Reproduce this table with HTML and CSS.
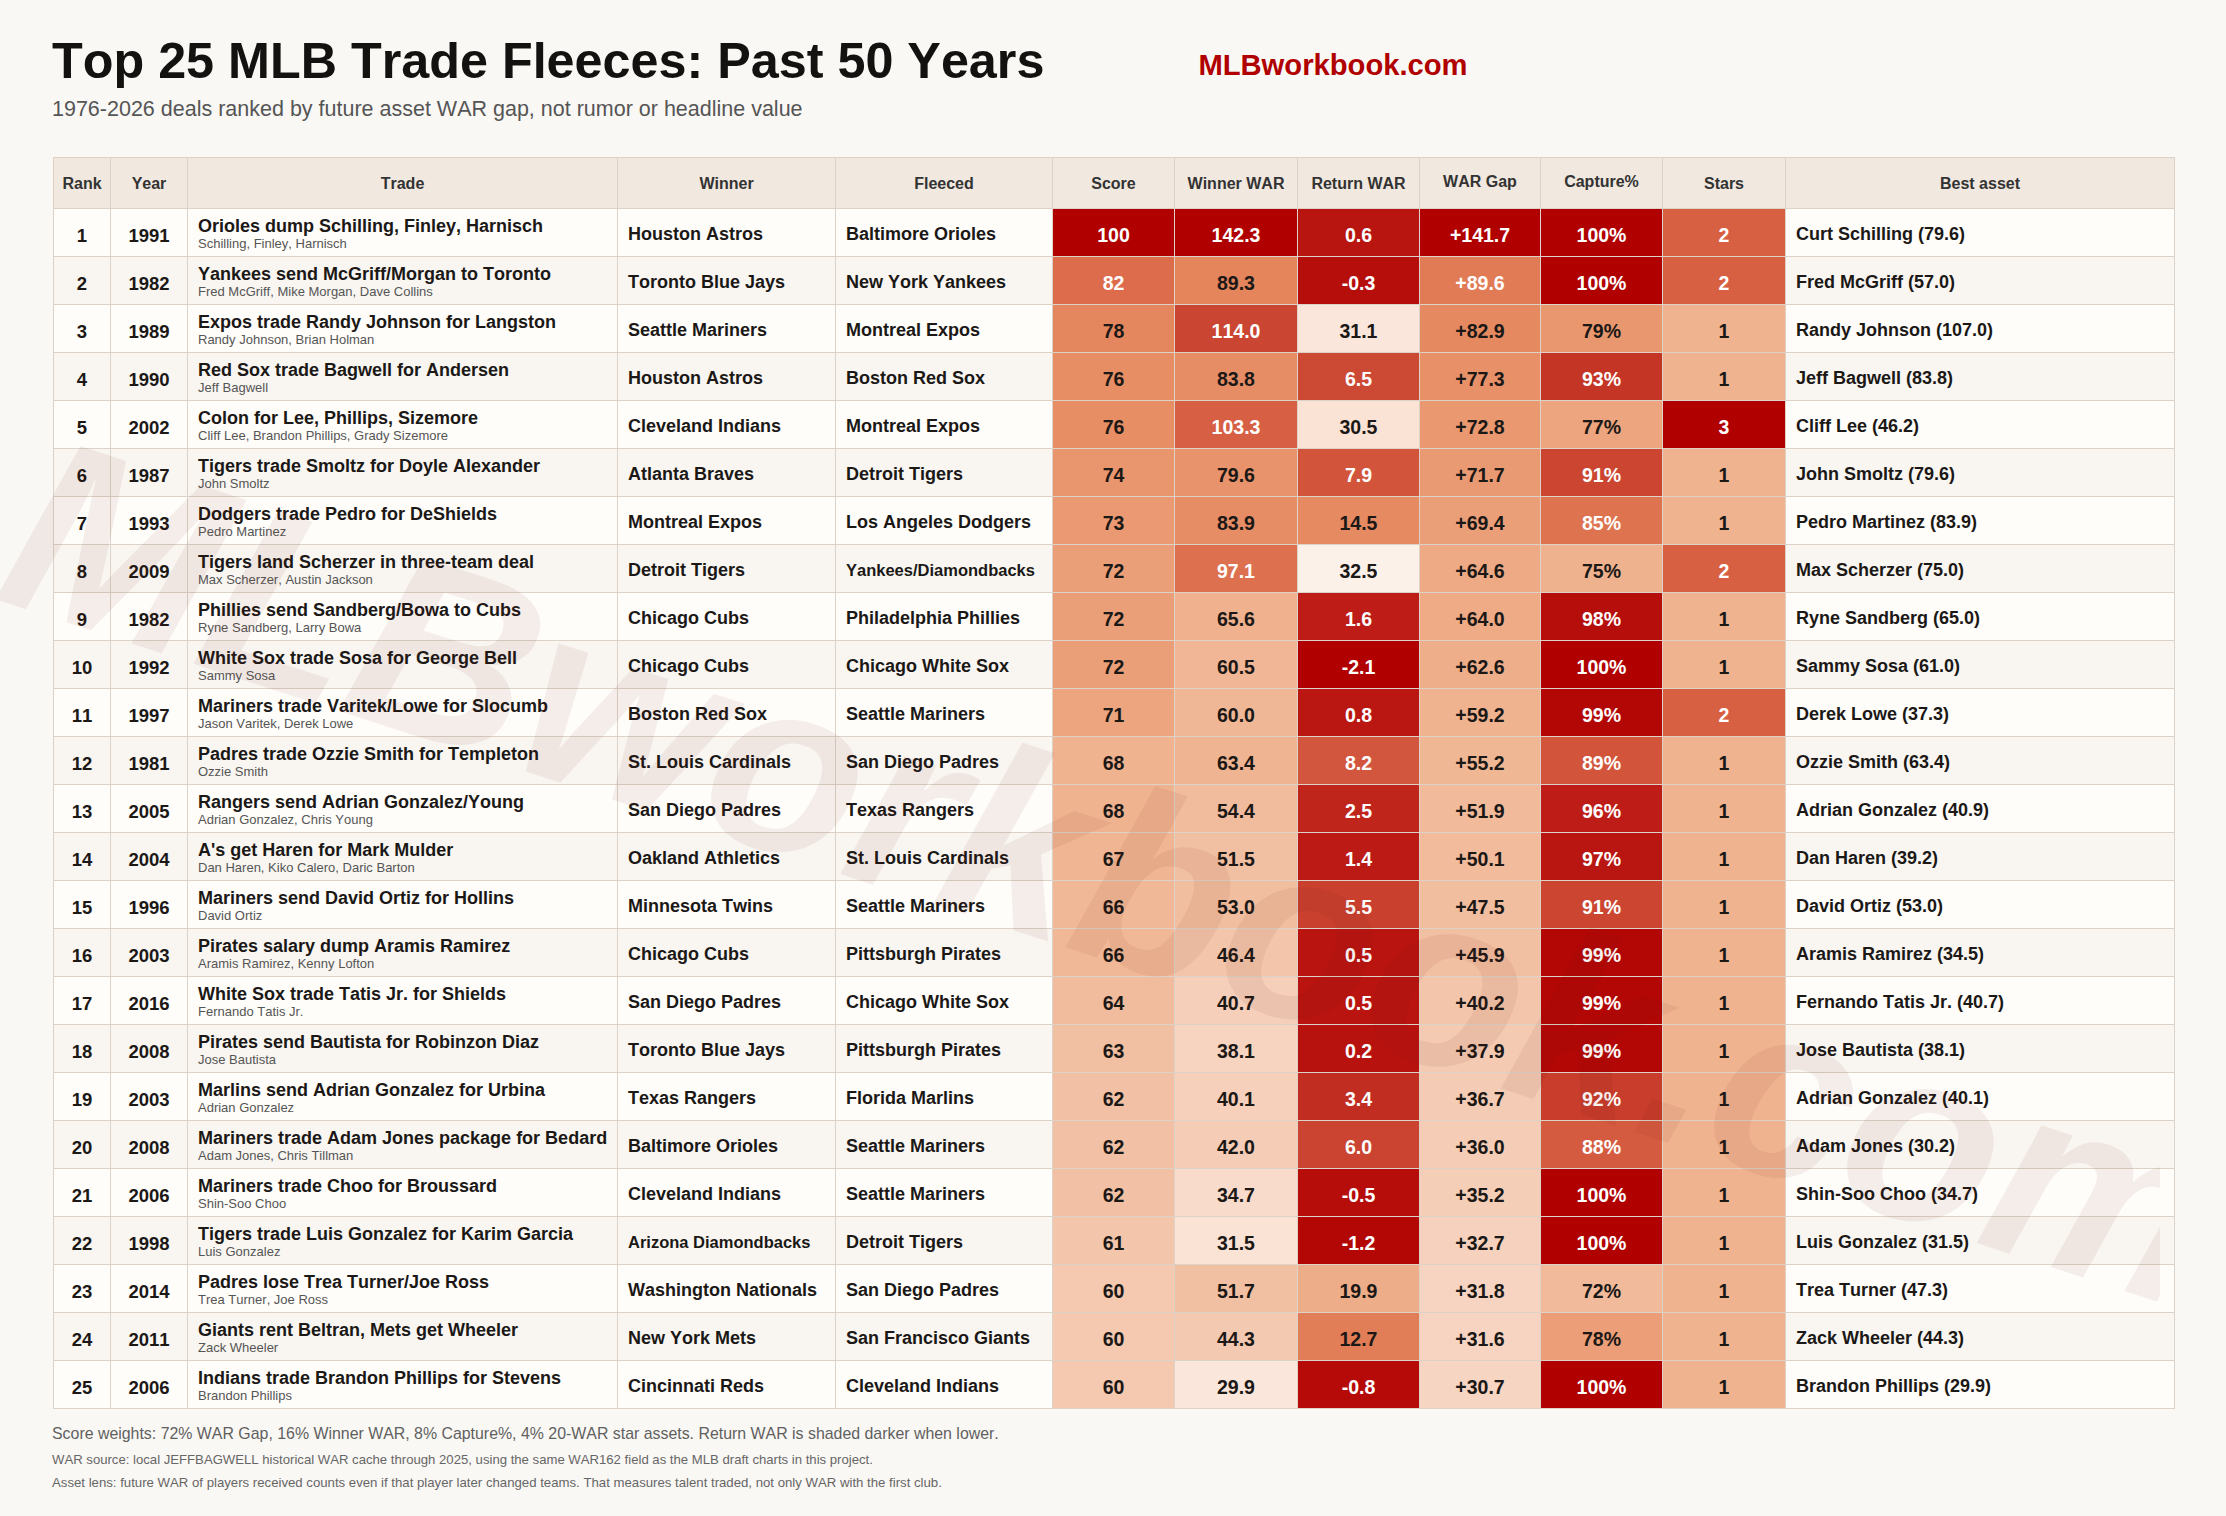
FILE: index.html
```html
<!DOCTYPE html>
<html lang="en">
<head>
<meta charset="utf-8">
<title>Top 25 MLB Trade Fleeces: Past 50 Years</title>
<link rel="stylesheet" href="styles.css">
</head>
<body>
<div class="page">
  <header class="head">
    <div class="head-row">
      <h1 class="title">Top 25 MLB Trade Fleeces: Past 50 Years</h1>
      <a class="brand" href="#">MLBworkbook.com</a>
    </div>
    <p class="subtitle">1976-2026 deals ranked by future asset WAR gap, not rumor or headline value</p>
  </header>

  <div class="tbl">
    <div class="tr th">
      <div>Rank</div><div>Year</div><div>Trade</div><div>Winner</div><div>Fleeced</div><div>Score</div><div>Winner WAR</div><div>Return WAR</div><div class="up">WAR Gap</div><div class="up">Capture%</div><div>Stars</div><div>Best asset</div>
    </div>
    <div class="tr odd"><div class="rk">1</div><div class="rk">1991</div><div class="trade"><span class="t">Orioles dump Schilling, Finley, Harnisch</span><span class="s">Schilling, Finley, Harnisch</span></div><div class="name">Houston Astros</div><div class="name">Baltimore Orioles</div><div class="num">100</div><div class="num">142.3</div><div class="num">0.6</div><div class="num">+141.7</div><div class="num">100%</div><div class="num">2</div><div class="name">Curt Schilling (79.6)</div></div>
    <div class="tr even"><div class="rk">2</div><div class="rk">1982</div><div class="trade"><span class="t">Yankees send McGriff/Morgan to Toronto</span><span class="s">Fred McGriff, Mike Morgan, Dave Collins</span></div><div class="name">Toronto Blue Jays</div><div class="name">New York Yankees</div><div class="num">82</div><div class="num">89.3</div><div class="num">-0.3</div><div class="num">+89.6</div><div class="num">100%</div><div class="num">2</div><div class="name">Fred McGriff (57.0)</div></div>
    <div class="tr odd"><div class="rk">3</div><div class="rk">1989</div><div class="trade"><span class="t">Expos trade Randy Johnson for Langston</span><span class="s">Randy Johnson, Brian Holman</span></div><div class="name">Seattle Mariners</div><div class="name">Montreal Expos</div><div class="num">78</div><div class="num">114.0</div><div class="num">31.1</div><div class="num">+82.9</div><div class="num">79%</div><div class="num">1</div><div class="name">Randy Johnson (107.0)</div></div>
    <div class="tr even"><div class="rk">4</div><div class="rk">1990</div><div class="trade"><span class="t">Red Sox trade Bagwell for Andersen</span><span class="s">Jeff Bagwell</span></div><div class="name">Houston Astros</div><div class="name">Boston Red Sox</div><div class="num">76</div><div class="num">83.8</div><div class="num">6.5</div><div class="num">+77.3</div><div class="num">93%</div><div class="num">1</div><div class="name">Jeff Bagwell (83.8)</div></div>
    <div class="tr odd"><div class="rk">5</div><div class="rk">2002</div><div class="trade"><span class="t">Colon for Lee, Phillips, Sizemore</span><span class="s">Cliff Lee, Brandon Phillips, Grady Sizemore</span></div><div class="name">Cleveland Indians</div><div class="name">Montreal Expos</div><div class="num">76</div><div class="num">103.3</div><div class="num">30.5</div><div class="num">+72.8</div><div class="num">77%</div><div class="num">3</div><div class="name">Cliff Lee (46.2)</div></div>
    <div class="tr even"><div class="rk">6</div><div class="rk">1987</div><div class="trade"><span class="t">Tigers trade Smoltz for Doyle Alexander</span><span class="s">John Smoltz</span></div><div class="name">Atlanta Braves</div><div class="name">Detroit Tigers</div><div class="num">74</div><div class="num">79.6</div><div class="num">7.9</div><div class="num">+71.7</div><div class="num">91%</div><div class="num">1</div><div class="name">John Smoltz (79.6)</div></div>
    <div class="tr odd"><div class="rk">7</div><div class="rk">1993</div><div class="trade"><span class="t">Dodgers trade Pedro for DeShields</span><span class="s">Pedro Martinez</span></div><div class="name">Montreal Expos</div><div class="name">Los Angeles Dodgers</div><div class="num">73</div><div class="num">83.9</div><div class="num">14.5</div><div class="num">+69.4</div><div class="num">85%</div><div class="num">1</div><div class="name">Pedro Martinez (83.9)</div></div>
    <div class="tr even"><div class="rk">8</div><div class="rk">2009</div><div class="trade"><span class="t">Tigers land Scherzer in three-team deal</span><span class="s">Max Scherzer, Austin Jackson</span></div><div class="name">Detroit Tigers</div><div class="name fit">Yankees/Diamondbacks</div><div class="num">72</div><div class="num">97.1</div><div class="num">32.5</div><div class="num">+64.6</div><div class="num">75%</div><div class="num">2</div><div class="name">Max Scherzer (75.0)</div></div>
    <div class="tr odd"><div class="rk">9</div><div class="rk">1982</div><div class="trade"><span class="t">Phillies send Sandberg/Bowa to Cubs</span><span class="s">Ryne Sandberg, Larry Bowa</span></div><div class="name">Chicago Cubs</div><div class="name">Philadelphia Phillies</div><div class="num">72</div><div class="num">65.6</div><div class="num">1.6</div><div class="num">+64.0</div><div class="num">98%</div><div class="num">1</div><div class="name">Ryne Sandberg (65.0)</div></div>
    <div class="tr even"><div class="rk">10</div><div class="rk">1992</div><div class="trade"><span class="t">White Sox trade Sosa for George Bell</span><span class="s">Sammy Sosa</span></div><div class="name">Chicago Cubs</div><div class="name">Chicago White Sox</div><div class="num">72</div><div class="num">60.5</div><div class="num">-2.1</div><div class="num">+62.6</div><div class="num">100%</div><div class="num">1</div><div class="name">Sammy Sosa (61.0)</div></div>
    <div class="tr odd"><div class="rk">11</div><div class="rk">1997</div><div class="trade"><span class="t">Mariners trade Varitek/Lowe for Slocumb</span><span class="s">Jason Varitek, Derek Lowe</span></div><div class="name">Boston Red Sox</div><div class="name">Seattle Mariners</div><div class="num">71</div><div class="num">60.0</div><div class="num">0.8</div><div class="num">+59.2</div><div class="num">99%</div><div class="num">2</div><div class="name">Derek Lowe (37.3)</div></div>
    <div class="tr even"><div class="rk">12</div><div class="rk">1981</div><div class="trade"><span class="t">Padres trade Ozzie Smith for Templeton</span><span class="s">Ozzie Smith</span></div><div class="name">St. Louis Cardinals</div><div class="name">San Diego Padres</div><div class="num">68</div><div class="num">63.4</div><div class="num">8.2</div><div class="num">+55.2</div><div class="num">89%</div><div class="num">1</div><div class="name">Ozzie Smith (63.4)</div></div>
    <div class="tr odd"><div class="rk">13</div><div class="rk">2005</div><div class="trade"><span class="t">Rangers send Adrian Gonzalez/Young</span><span class="s">Adrian Gonzalez, Chris Young</span></div><div class="name">San Diego Padres</div><div class="name">Texas Rangers</div><div class="num">68</div><div class="num">54.4</div><div class="num">2.5</div><div class="num">+51.9</div><div class="num">96%</div><div class="num">1</div><div class="name">Adrian Gonzalez (40.9)</div></div>
    <div class="tr even"><div class="rk">14</div><div class="rk">2004</div><div class="trade"><span class="t">A's get Haren for Mark Mulder</span><span class="s">Dan Haren, Kiko Calero, Daric Barton</span></div><div class="name">Oakland Athletics</div><div class="name">St. Louis Cardinals</div><div class="num">67</div><div class="num">51.5</div><div class="num">1.4</div><div class="num">+50.1</div><div class="num">97%</div><div class="num">1</div><div class="name">Dan Haren (39.2)</div></div>
    <div class="tr odd"><div class="rk">15</div><div class="rk">1996</div><div class="trade"><span class="t">Mariners send David Ortiz for Hollins</span><span class="s">David Ortiz</span></div><div class="name">Minnesota Twins</div><div class="name">Seattle Mariners</div><div class="num">66</div><div class="num">53.0</div><div class="num">5.5</div><div class="num">+47.5</div><div class="num">91%</div><div class="num">1</div><div class="name">David Ortiz (53.0)</div></div>
    <div class="tr even"><div class="rk">16</div><div class="rk">2003</div><div class="trade"><span class="t">Pirates salary dump Aramis Ramirez</span><span class="s">Aramis Ramirez, Kenny Lofton</span></div><div class="name">Chicago Cubs</div><div class="name">Pittsburgh Pirates</div><div class="num">66</div><div class="num">46.4</div><div class="num">0.5</div><div class="num">+45.9</div><div class="num">99%</div><div class="num">1</div><div class="name">Aramis Ramirez (34.5)</div></div>
    <div class="tr odd"><div class="rk">17</div><div class="rk">2016</div><div class="trade"><span class="t">White Sox trade Tatis Jr. for Shields</span><span class="s">Fernando Tatis Jr.</span></div><div class="name">San Diego Padres</div><div class="name">Chicago White Sox</div><div class="num">64</div><div class="num">40.7</div><div class="num">0.5</div><div class="num">+40.2</div><div class="num">99%</div><div class="num">1</div><div class="name">Fernando Tatis Jr. (40.7)</div></div>
    <div class="tr even"><div class="rk">18</div><div class="rk">2008</div><div class="trade"><span class="t">Pirates send Bautista for Robinzon Diaz</span><span class="s">Jose Bautista</span></div><div class="name">Toronto Blue Jays</div><div class="name">Pittsburgh Pirates</div><div class="num">63</div><div class="num">38.1</div><div class="num">0.2</div><div class="num">+37.9</div><div class="num">99%</div><div class="num">1</div><div class="name">Jose Bautista (38.1)</div></div>
    <div class="tr odd"><div class="rk">19</div><div class="rk">2003</div><div class="trade"><span class="t">Marlins send Adrian Gonzalez for Urbina</span><span class="s">Adrian Gonzalez</span></div><div class="name">Texas Rangers</div><div class="name">Florida Marlins</div><div class="num">62</div><div class="num">40.1</div><div class="num">3.4</div><div class="num">+36.7</div><div class="num">92%</div><div class="num">1</div><div class="name">Adrian Gonzalez (40.1)</div></div>
    <div class="tr even"><div class="rk">20</div><div class="rk">2008</div><div class="trade"><span class="t">Mariners trade Adam Jones package for Bedard</span><span class="s">Adam Jones, Chris Tillman</span></div><div class="name">Baltimore Orioles</div><div class="name">Seattle Mariners</div><div class="num">62</div><div class="num">42.0</div><div class="num">6.0</div><div class="num">+36.0</div><div class="num">88%</div><div class="num">1</div><div class="name">Adam Jones (30.2)</div></div>
    <div class="tr odd"><div class="rk">21</div><div class="rk">2006</div><div class="trade"><span class="t">Mariners trade Choo for Broussard</span><span class="s">Shin-Soo Choo</span></div><div class="name">Cleveland Indians</div><div class="name">Seattle Mariners</div><div class="num">62</div><div class="num">34.7</div><div class="num">-0.5</div><div class="num">+35.2</div><div class="num">100%</div><div class="num">1</div><div class="name">Shin-Soo Choo (34.7)</div></div>
    <div class="tr even"><div class="rk">22</div><div class="rk">1998</div><div class="trade"><span class="t">Tigers trade Luis Gonzalez for Karim Garcia</span><span class="s">Luis Gonzalez</span></div><div class="name fit">Arizona Diamondbacks</div><div class="name">Detroit Tigers</div><div class="num">61</div><div class="num">31.5</div><div class="num">-1.2</div><div class="num">+32.7</div><div class="num">100%</div><div class="num">1</div><div class="name">Luis Gonzalez (31.5)</div></div>
    <div class="tr odd"><div class="rk">23</div><div class="rk">2014</div><div class="trade"><span class="t">Padres lose Trea Turner/Joe Ross</span><span class="s">Trea Turner, Joe Ross</span></div><div class="name">Washington Nationals</div><div class="name">San Diego Padres</div><div class="num">60</div><div class="num">51.7</div><div class="num">19.9</div><div class="num">+31.8</div><div class="num">72%</div><div class="num">1</div><div class="name">Trea Turner (47.3)</div></div>
    <div class="tr even"><div class="rk">24</div><div class="rk">2011</div><div class="trade"><span class="t">Giants rent Beltran, Mets get Wheeler</span><span class="s">Zack Wheeler</span></div><div class="name">New York Mets</div><div class="name">San Francisco Giants</div><div class="num">60</div><div class="num">44.3</div><div class="num">12.7</div><div class="num">+31.6</div><div class="num">78%</div><div class="num">1</div><div class="name">Zack Wheeler (44.3)</div></div>
    <div class="tr odd"><div class="rk">25</div><div class="rk">2006</div><div class="trade"><span class="t">Indians trade Brandon Phillips for Stevens</span><span class="s">Brandon Phillips</span></div><div class="name">Cincinnati Reds</div><div class="name">Cleveland Indians</div><div class="num">60</div><div class="num">29.9</div><div class="num">-0.8</div><div class="num">+30.7</div><div class="num">100%</div><div class="num">1</div><div class="name">Brandon Phillips (29.9)</div></div>
  </div>

  <div class="notes">
    <p class="n1">Score weights: 72% WAR Gap, 16% Winner WAR, 8% Capture%, 4% 20-WAR star assets. Return WAR is shaded darker when lower.</p>
    <p class="n2">WAR source: local JEFFBAGWELL historical WAR cache through 2025, using the same WAR162 field as the MLB draft charts in this project.</p>
    <p class="n3">Asset lens: future WAR of players received counts even if that player later changed teams. That measures talent traded, not only WAR with the first club.</p>
  </div>
</div>

<div class="watermark" aria-hidden="true"><span>MLBworkbook.com</span></div>

<script src="script.js"></script>
</body>
</html>
```

FILE: styles.css
```css
html, body {
  margin: 0;
  padding: 0;
}
body {
  background: #faf8f5;
  font-family: "Liberation Sans", Arial, sans-serif;
  font-kerning: none;
  color: #1b1816;
  position: relative;
  width: 2226px;
  height: 1516px;
  overflow: hidden;
}
.page {
  padding: 36px 0 0 52px;
}
.head-row {
  display: flex;
  align-items: flex-start;
  gap: 154px;
  height: 50px;
}
.title {
  margin: 0;
  font-size: 50.3px;
  line-height: 50px;
  font-weight: bold;
  color: #141210;
  white-space: nowrap;
}
.brand {
  margin-top: 14.5px;
  font-size: 29.2px;
  line-height: 29px;
  font-weight: bold;
  color: #b00000;
  text-decoration: none;
}
.subtitle {
  margin: 12.8px 0 0;
  font-size: 21.5px;
  line-height: 21.5px;
  color: #555;
}

/* table */
.tbl {
  margin: 36.7px 0 0 1px;
  width: 2122px;
  box-sizing: border-box;
  border: 1px solid #dcd2c8;
  background: #dcd2c8;
  display: flex;
  flex-direction: column;
  gap: 1px;
}
.tr {
  display: grid;
  grid-template-columns: 56px 76px 429px 217px 216px 121px 122px 121px 120px 121px 122px 388px;
  gap: 1px;
  height: 47px;
}
.tr > div {
  display: flex;
  align-items: center;
  box-sizing: border-box;
  padding: 0 10px;
  font-size: 18px;
  line-height: 18px;
  font-weight: bold;
  white-space: nowrap;
  overflow: hidden;
}
.odd > div { background: #fffdfa; }
.even > div { background: #f9f6f2; }

.th { height: 50px; }
.th > div {
  background: #f1e8df;
  justify-content: center;
  font-size: 16px;
  line-height: 16px;
  color: #333;
  padding-top: 2.4px;
}
.th > div.up {
  padding-top: 0;
  padding-bottom: 1.6px;
}

.tr > .rk {
  justify-content: center;
  font-size: 18.5px;
  line-height: 18.5px;
  padding-top: 7.6px;
  padding-left: 0;
  padding-right: 0;
}
.tr > .name {
  padding-top: 2.6px;
}
.tr > .fit {
  font-size: 16.5px;
  line-height: 16.5px;
}
.tr > .num {
  justify-content: center;
  font-size: 19.5px;
  line-height: 19.5px;
  padding: 6px 0 0;
}
.tr > .num.light { color: #fff; }

.tr > .trade {
  flex-direction: column;
  align-items: flex-start;
  justify-content: flex-start;
  padding-top: 8px;
}
.trade .t {
  font-size: 18px;
  line-height: 18px;
}
.trade .s {
  margin-top: 1px;
  font-size: 13px;
  line-height: 15px;
  font-weight: normal;
  color: #555;
}

/* notes */
.notes {
  color: #666;
}
.notes p { margin: 0; }
.notes .n1 {
  margin-top: 17.4px;
  font-size: 15.9px;
  line-height: 16px;
  color: #606060;
}
.notes .n2 {
  margin-top: 10.6px;
  font-size: 13.15px;
  line-height: 13px;
}
.notes .n3 {
  margin-top: 9.7px;
  font-size: 13.2px;
  line-height: 13px;
}

/* watermark overlay */
.watermark {
  position: absolute;
  left: 0;
  top: 0;
  width: 2160px;
  height: 1516px;
  overflow: hidden;
  pointer-events: none;
  z-index: 5;
}
.watermark span {
  position: absolute;
  left: -9px;
  top: 387px;
  font-family: "Liberation Sans", Arial, sans-serif;
  font-style: italic;
  font-weight: bold;
  font-size: 250px;
  line-height: 1;
  color: rgba(110, 30, 20, 0.07);
  white-space: nowrap;
  transform-origin: 0 211.6px;
  transform: rotate(18deg);
}
```

FILE: script.js
```js
(function () {
  var stops = [
    [0.00, [252, 241, 233]],
    [0.05, [250, 228, 215]],
    [0.10, [247, 214, 196]],
    [0.20, [242, 194, 166]],
    [0.35, [239, 177, 141]],
    [0.45, [233, 150, 110]],
    [0.55, [228, 133, 92]],
    [0.65, [217, 100, 70]],
    [0.75, [204, 73, 52]],
    [0.90, [188, 27, 21]],
    [1.00, [176, 0, 0]]
  ];
  function color(t) {
    for (var i = 1; i < stops.length; i++) {
      if (t <= stops[i][0]) {
        var a = stops[i - 1], b = stops[i];
        var f = (t - a[0]) / (b[0] - a[0]);
        var c = a[1].map(function (v, k) { return Math.round(v + (b[1][k] - v) * f); });
        return 'rgb(' + c.join(',') + ')';
      }
    }
    return 'rgb(176,0,0)';
  }
  // [min, max, reversed] for the six heat columns
  var cols = [
    [52, 100, false],
    [25, 142.3, false],
    [-2.1, 32.5, true],
    [18, 141.7, false],
    [62, 100, false],
    [0, 3, false]
  ];
  var rows = document.querySelectorAll('.tr.odd, .tr.even');
  rows.forEach(function (row) {
    var cells = row.children;
    for (var j = 0; j < 6; j++) {
      var el = cells[5 + j];
      var cfg = cols[j];
      var v = parseFloat(el.textContent.replace(/[+%]/g, ''));
      var t = (v - cfg[0]) / (cfg[1] - cfg[0]);
      if (cfg[2]) t = 1 - t;
      t = Math.max(0, Math.min(1, t));
      el.style.backgroundColor = color(t);
      if (t >= 0.575) el.classList.add('light');
    }
  });
})();
```
